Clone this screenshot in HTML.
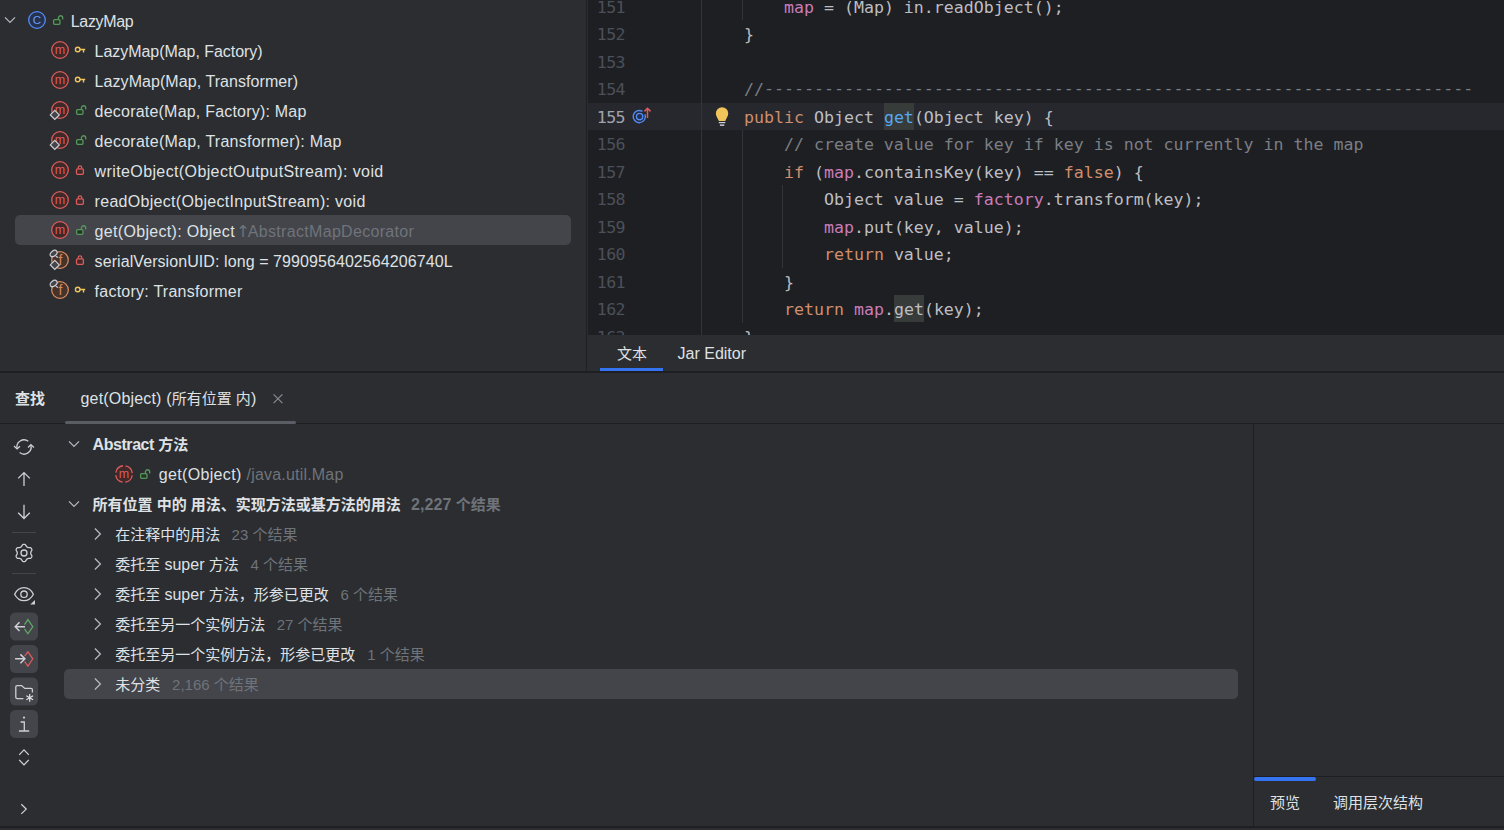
<!DOCTYPE html>
<html lang="zh-CN">
<head>
<meta charset="utf-8">
<title>LazyMap</title>
<style>
html,body{margin:0;padding:0;}
body{width:1504px;height:830px;overflow:hidden;position:relative;background:#2b2d30;
  font-family:"Liberation Sans","Noto Sans CJK SC",sans-serif;font-size:15px;color:#dfe1e5;}
.abs{position:absolute;}
svg{position:absolute;overflow:visible;}
/* ---------- structure tree (top-left) ---------- */
.srow{position:absolute;left:0;height:30px;line-height:30px;white-space:nowrap;font-size:16px;color:#dfe1e5;}
.srow .t{position:absolute;top:2px;}
.g{color:#6f737a;}
/* ---------- editor ---------- */
#editor{position:absolute;left:588px;top:0;width:916px;height:335px;background:#1e1f22;overflow:hidden;}
.ln,.cl{position:absolute;height:27.5px;line-height:27.5px;white-space:pre;font-family:"DejaVu Sans Mono","Liberation Mono",monospace;font-size:16.6px;}
.ln{left:0;width:37px;text-align:right;color:#4b5059;letter-spacing:-0.6px;margin-top:1px;}
.cl{left:156px;color:#bcbec4;margin-top:1px;}
.k{color:#cf8e6d;}.f{color:#c77dbb;}.c{color:#7a7e85;}.m{color:#56a8f5;}
.hl{background:#373b39;padding:5px 0 3px;}
/* ---------- find tree (bottom) ---------- */
.frow{position:absolute;left:0;height:30px;line-height:30px;white-space:nowrap;font-size:15px;color:#dfe1e5;}
.frow .t{position:absolute;top:1px;}
.b{font-weight:bold;}
</style>
</head>
<body>

<!-- ================= STRUCTURE PANEL ================= -->
<div id="structure" class="abs" style="left:0;top:0;width:586px;height:371px;background:#2b2d30;overflow:hidden;">
<!--STRUCT-->
<div class="abs" style="left:15px;top:215px;width:556px;height:30px;border-radius:5px;background:#43454a;"></div>
<svg style="left:0px;top:10px" width="20" height="20" viewBox="0 0 20 20"><path d="M5 7.4L10 12.4L15 7.4" fill="none" stroke="#b4b8bf" stroke-width="1.3"/></svg>
<svg style="left:27px;top:10px" width="20" height="20" viewBox="0 0 20 20"><circle cx="10" cy="10" r="8.3" fill="#25324d" stroke="#548af7" stroke-width="1.3"/><text x="10" y="14.1" text-anchor="middle" font-family="Liberation Sans,sans-serif" font-size="11.5" fill="#6b9bfa">C</text></svg>
<svg style="left:47px;top:10px" width="20" height="20" viewBox="0 0 20 20"><rect x="6.6" y="9.7" width="6.4" height="4.6" rx="1" fill="#253627" stroke="#57965c" stroke-width="1.3"/><path d="M11.4 9.2V7.9a2.15 2.15 0 0 1 4.3 0V9.4" fill="none" stroke="#57965c" stroke-width="1.3"/></svg>
<div class="srow" style="top:5px"><span class="t" style="left:70.8px;letter-spacing:-0.346px">LazyMap</span></div>
<svg style="left:50px;top:40px" width="20" height="20" viewBox="0 0 20 20"><circle cx="10" cy="10" r="8.3" fill="#402929" stroke="#db5c5c" stroke-width="1.3"/><text x="10" y="14.2" text-anchor="middle" font-family="Liberation Sans,sans-serif" font-size="12.5" fill="#db5c5c">m</text></svg>
<svg style="left:70px;top:40px" width="20" height="20" viewBox="0 0 20 20"><circle cx="7.7" cy="9.5" r="2.3" fill="none" stroke="#f2c55c" stroke-width="1.4"/><path d="M10 9.5H15.2M13.5 9.5V12.4" fill="none" stroke="#f2c55c" stroke-width="1.4"/></svg>
<div class="srow" style="top:35px"><span class="t" style="left:94.6px;letter-spacing:-0.045px">LazyMap(Map, Factory)</span></div>
<svg style="left:50px;top:70px" width="20" height="20" viewBox="0 0 20 20"><circle cx="10" cy="10" r="8.3" fill="#402929" stroke="#db5c5c" stroke-width="1.3"/><text x="10" y="14.2" text-anchor="middle" font-family="Liberation Sans,sans-serif" font-size="12.5" fill="#db5c5c">m</text></svg>
<svg style="left:70px;top:70px" width="20" height="20" viewBox="0 0 20 20"><circle cx="7.7" cy="9.5" r="2.3" fill="none" stroke="#f2c55c" stroke-width="1.4"/><path d="M10 9.5H15.2M13.5 9.5V12.4" fill="none" stroke="#f2c55c" stroke-width="1.4"/></svg>
<div class="srow" style="top:65px"><span class="t" style="left:94.6px;letter-spacing:0.066px">LazyMap(Map, Transformer)</span></div>
<svg style="left:50px;top:100px" width="20" height="20" viewBox="0 0 20 20"><circle cx="10" cy="10" r="8.3" fill="#402929" stroke="#db5c5c" stroke-width="1.3"/><text x="10" y="14.2" text-anchor="middle" font-family="Liberation Sans,sans-serif" font-size="12.5" fill="#db5c5c">m</text></svg>
<svg style="left:50px;top:100px" width="20" height="20" viewBox="0 0 20 20"><path d="M4.8 10.3L9.3 14.9L4.8 19.5L0.3 14.9Z" fill="#43454a" stroke="#ced0d6" stroke-width="1.2"/></svg>
<svg style="left:70px;top:100px" width="20" height="20" viewBox="0 0 20 20"><rect x="6.6" y="9.7" width="6.4" height="4.6" rx="1" fill="#253627" stroke="#57965c" stroke-width="1.3"/><path d="M11.4 9.2V7.9a2.15 2.15 0 0 1 4.3 0V9.4" fill="none" stroke="#57965c" stroke-width="1.3"/></svg>
<div class="srow" style="top:95px"><span class="t" style="left:94.6px;letter-spacing:0.211px">decorate(Map, Factory): Map</span></div>
<svg style="left:50px;top:130px" width="20" height="20" viewBox="0 0 20 20"><circle cx="10" cy="10" r="8.3" fill="#402929" stroke="#db5c5c" stroke-width="1.3"/><text x="10" y="14.2" text-anchor="middle" font-family="Liberation Sans,sans-serif" font-size="12.5" fill="#db5c5c">m</text></svg>
<svg style="left:50px;top:130px" width="20" height="20" viewBox="0 0 20 20"><path d="M4.8 10.3L9.3 14.9L4.8 19.5L0.3 14.9Z" fill="#43454a" stroke="#ced0d6" stroke-width="1.2"/></svg>
<svg style="left:70px;top:130px" width="20" height="20" viewBox="0 0 20 20"><rect x="6.6" y="9.7" width="6.4" height="4.6" rx="1" fill="#253627" stroke="#57965c" stroke-width="1.3"/><path d="M11.4 9.2V7.9a2.15 2.15 0 0 1 4.3 0V9.4" fill="none" stroke="#57965c" stroke-width="1.3"/></svg>
<div class="srow" style="top:125px"><span class="t" style="left:94.6px;letter-spacing:0.252px">decorate(Map, Transformer): Map</span></div>
<svg style="left:50px;top:160px" width="20" height="20" viewBox="0 0 20 20"><circle cx="10" cy="10" r="8.3" fill="#402929" stroke="#db5c5c" stroke-width="1.3"/><text x="10" y="14.2" text-anchor="middle" font-family="Liberation Sans,sans-serif" font-size="12.5" fill="#db5c5c">m</text></svg>
<svg style="left:70px;top:160px" width="20" height="20" viewBox="0 0 20 20"><rect x="6.5" y="8.9" width="6.9" height="5.4" rx="1" fill="#402929" stroke="#db5c5c" stroke-width="1.3"/><path d="M8.3 8.6V7.5a1.7 1.7 0 0 1 3.4 0V8.6" fill="none" stroke="#db5c5c" stroke-width="1.3"/></svg>
<div class="srow" style="top:155px"><span class="t" style="left:94.6px;letter-spacing:0.385px">writeObject(ObjectOutputStream): void</span></div>
<svg style="left:50px;top:190px" width="20" height="20" viewBox="0 0 20 20"><circle cx="10" cy="10" r="8.3" fill="#402929" stroke="#db5c5c" stroke-width="1.3"/><text x="10" y="14.2" text-anchor="middle" font-family="Liberation Sans,sans-serif" font-size="12.5" fill="#db5c5c">m</text></svg>
<svg style="left:70px;top:190px" width="20" height="20" viewBox="0 0 20 20"><rect x="6.5" y="8.9" width="6.9" height="5.4" rx="1" fill="#402929" stroke="#db5c5c" stroke-width="1.3"/><path d="M8.3 8.6V7.5a1.7 1.7 0 0 1 3.4 0V8.6" fill="none" stroke="#db5c5c" stroke-width="1.3"/></svg>
<div class="srow" style="top:185px"><span class="t" style="left:94.6px;letter-spacing:0.298px">readObject(ObjectInputStream): void</span></div>
<svg style="left:50px;top:220px" width="20" height="20" viewBox="0 0 20 20"><circle cx="10" cy="10" r="8.3" fill="#402929" stroke="#db5c5c" stroke-width="1.3"/><text x="10" y="14.2" text-anchor="middle" font-family="Liberation Sans,sans-serif" font-size="12.5" fill="#db5c5c">m</text></svg>
<svg style="left:70px;top:220px" width="20" height="20" viewBox="0 0 20 20"><rect x="6.6" y="9.7" width="6.4" height="4.6" rx="1" fill="#253627" stroke="#57965c" stroke-width="1.3"/><path d="M11.4 9.2V7.9a2.15 2.15 0 0 1 4.3 0V9.4" fill="none" stroke="#57965c" stroke-width="1.3"/></svg>
<div class="srow" style="top:215px"><span class="t" style="left:94.6px;letter-spacing:0.317px">get(Object): Object</span><span class="t g" style="left:236.2px;top:2px;font-family:'DejaVu Sans',sans-serif;font-size:16.5px">↑</span><span class="t g" style="left:247.8px;letter-spacing:0.317px">AbstractMapDecorator</span></div>
<svg style="left:50px;top:250px" width="20" height="20" viewBox="0 0 20 20"><circle cx="10" cy="10" r="8.3" fill="#45322b" stroke="#d68a5e" stroke-width="1.3"/><text x="10.5" y="14.9" text-anchor="middle" font-family="Liberation Sans,sans-serif" font-size="14" fill="#d68a5e">f</text></svg>
<svg style="left:50px;top:250px" width="20" height="20" viewBox="0 0 20 20"><ellipse cx="3.6" cy="3.5" rx="3.9" ry="2.6" transform="rotate(-38 3.6 3.5)" fill="#43454a" stroke="#ced0d6" stroke-width="1.2"/><path d="M5.8 6.2L8 7.6" stroke="#ced0d6" stroke-width="1.2" fill="none"/></svg>
<svg style="left:50px;top:250px" width="20" height="20" viewBox="0 0 20 20"><path d="M4.8 10.3L9.3 14.9L4.8 19.5L0.3 14.9Z" fill="#43454a" stroke="#ced0d6" stroke-width="1.2"/></svg>
<svg style="left:70px;top:250px" width="20" height="20" viewBox="0 0 20 20"><rect x="6.5" y="8.9" width="6.9" height="5.4" rx="1" fill="#402929" stroke="#db5c5c" stroke-width="1.3"/><path d="M8.3 8.6V7.5a1.7 1.7 0 0 1 3.4 0V8.6" fill="none" stroke="#db5c5c" stroke-width="1.3"/></svg>
<div class="srow" style="top:245px"><span class="t" style="left:94.6px;letter-spacing:0.078px">serialVersionUID: long = 7990956402564206740L</span></div>
<svg style="left:50px;top:280px" width="20" height="20" viewBox="0 0 20 20"><circle cx="10" cy="10" r="8.3" fill="#45322b" stroke="#d68a5e" stroke-width="1.3"/><text x="10.5" y="14.9" text-anchor="middle" font-family="Liberation Sans,sans-serif" font-size="14" fill="#d68a5e">f</text></svg>
<svg style="left:50px;top:280px" width="20" height="20" viewBox="0 0 20 20"><ellipse cx="3.6" cy="3.5" rx="3.9" ry="2.6" transform="rotate(-38 3.6 3.5)" fill="#43454a" stroke="#ced0d6" stroke-width="1.2"/><path d="M5.8 6.2L8 7.6" stroke="#ced0d6" stroke-width="1.2" fill="none"/></svg>
<svg style="left:70px;top:280px" width="20" height="20" viewBox="0 0 20 20"><circle cx="7.7" cy="9.5" r="2.3" fill="none" stroke="#f2c55c" stroke-width="1.4"/><path d="M10 9.5H15.2M13.5 9.5V12.4" fill="none" stroke="#f2c55c" stroke-width="1.4"/></svg>
<div class="srow" style="top:275px"><span class="t" style="left:94.6px;letter-spacing:0.242px">factory: Transformer</span></div>
<!--/STRUCT-->
</div>
<div class="abs" style="left:586px;top:0;width:1px;height:371px;background:#1e1f22;"></div>

<!-- ================= EDITOR ================= -->
<div id="editor">
<div class="abs" style="left:0;top:103px;width:916px;height:27px;background:#26282e;"></div>
<div class="abs" style="left:113px;top:0;width:1px;height:335px;background:#313438;"></div>
<div class="abs" style="left:154px;top:0;width:1px;height:20px;background:#313438;"></div>
<div class="abs" style="left:154px;top:130px;width:1px;height:193px;background:#313438;"></div>
<div class="abs" style="left:194px;top:185px;width:1px;height:83px;background:#313438;"></div>
<div class="ln" style="top:-7px;">151</div><div class="cl" style="top:-7px;">    <span class="f">map</span> = (Map) in.readObject();</div>
<div class="ln" style="top:20px;">152</div><div class="cl" style="top:20px;">}</div>
<div class="ln" style="top:48px;">153</div><div class="cl" style="top:48px;"></div>
<div class="ln" style="top:75px;">154</div><div class="cl" style="top:75px;"><span class="c">//<span style="position:relative;top:-1px">-----------------------------------------------------------------------</span></span></div>
<div class="ln" style="top:103px;color:#a1a3ab;">155</div><div class="cl" style="top:103px;"><span class="k">public</span> Object <span class="m hl">get</span>(Object key) {</div>
<div class="ln" style="top:130px;">156</div><div class="cl" style="top:130px;">    <span class="c">// create value for key if key is not currently in the map</span></div>
<div class="ln" style="top:158px;">157</div><div class="cl" style="top:158px;">    <span class="k">if</span> (<span class="f">map</span>.containsKey(key) == <span class="k">false</span>) {</div>
<div class="ln" style="top:185px;">158</div><div class="cl" style="top:185px;">        Object value = <span class="f">factory</span>.transform(key);</div>
<div class="ln" style="top:213px;">159</div><div class="cl" style="top:213px;">        <span class="f">map</span>.put(key, value);</div>
<div class="ln" style="top:240px;">160</div><div class="cl" style="top:240px;">        <span class="k">return</span> value;</div>
<div class="ln" style="top:268px;">161</div><div class="cl" style="top:268px;">    }</div>
<div class="ln" style="top:295px;">162</div><div class="cl" style="top:295px;">    <span class="k">return</span> <span class="f">map</span>.<span class="hl">get</span>(key);</div>
<div class="ln" style="top:323px;">163</div><div class="cl" style="top:323px;">}</div>
<svg style="left:40px;top:103px" width="40" height="27" viewBox="0 0 40 27">
<path d="M16.9 11.2A6.1 6.1 0 1 1 14.5 8.4" fill="none" stroke="#548af7" stroke-width="1.4"/>
<circle cx="11.6" cy="13.6" r="3.2" fill="#25324d" stroke="#548af7" stroke-width="1.4"/>
<path d="M19.5 14.9V5.4M16.4 8.4L19.5 5.3L22.6 8.4" fill="none" stroke="#db5c5c" stroke-width="1.5"/>
</svg>
<svg style="left:124px;top:103px" width="20" height="27" viewBox="0 0 20 27">
<circle cx="10.04" cy="10.5" r="6.2" fill="#f2c55c"/>
<path d="M5 14L15.1 14L13.3 18H6.8Z" fill="#f2c55c"/>
<rect x="6.8" y="19" width="6.5" height="1.2" fill="#ced0d6"/>
<rect x="7.9" y="21.3" width="4.4" height="1.7" fill="#b4b8bf"/>
</svg>
</div>

<!-- editor bottom tabs -->
<div class="abs" style="left:587px;top:335px;width:917px;height:36px;background:#2b2d30;">
  <div class="abs" style="left:30px;top:1px;height:36px;line-height:36px;font-size:15px;color:#dfe1e5;">文本</div>
  <div class="abs" style="left:90.6px;top:1px;height:36px;line-height:36px;font-size:16px;letter-spacing:-0.007px;color:#dfe1e5;">Jar Editor</div>
  <div class="abs" style="left:13px;top:33px;width:63px;height:3px;background:#3574f0;"></div>
</div>
<div class="abs" style="left:0;top:371px;width:1504px;height:2px;background:#1e1f22;"></div>

<!-- ================= FIND PANEL ================= -->
<div id="find" class="abs" style="left:0;top:373px;width:1504px;height:453px;background:#2b2d30;overflow:hidden;">
<!--FIND-->
<div class="abs b" style="left:15px;top:11px;height:30px;line-height:30px;font-size:15px;color:#dfe1e5;">查找</div>
<div class="abs" style="left:80.5px;top:11px;height:30px;line-height:30px;font-size:15px;color:#dfe1e5;white-space:pre;"><span style="font-size:16px;letter-spacing:0.175px">get(Object) (</span>所有位置 内<span style="font-size:16px">)</span></div>
<svg style="left:268px;top:16px" width="20" height="20" viewBox="0 0 20 20"><path d="M5.6 5.4L14.4 14.2M14.4 5.4L5.6 14.2" fill="none" stroke="#868a91" stroke-width="1.2"/></svg>
<div class="abs" style="left:0;top:50px;width:1504px;height:1px;background:#1e1f22;"></div>
<div class="abs" style="left:65px;top:48px;width:231px;height:3px;border-radius:1.5px;background:#5a5d63;"></div>
<svg style="left:0;top:0" width="50" height="453" viewBox="0 0 50 453"><path d="M17.06 75.48A7.1 7.1 0 0 1 28.27 68.33" fill="none" stroke="#ced0d6" stroke-width="1.3"/><path d="M30.86 72.16A7.1 7.1 0 0 1 19.63 79.59" fill="none" stroke="#ced0d6" stroke-width="1.3"/><polyline points="14,73 17.05,75.9 20,73.2" fill="none" stroke="#ced0d6" stroke-width="1.3"/><polyline points="28,74.5 30.9,71.6 33.9,74.5" fill="none" stroke="#ced0d6" stroke-width="1.3"/><path d="M24 113V99.6M18.2 105.4L24 99.6L29.8 105.4" fill="none" stroke="#ced0d6" stroke-width="1.3"/><path d="M24 131.7V145.5M18.2 139.7L24 145.5L29.8 139.7" fill="none" stroke="#ced0d6" stroke-width="1.3"/><rect x="12" y="159" width="24" height="1" fill="#43454a"/><rect x="12" y="200" width="24" height="1" fill="#43454a"/><path d="M30.70 180.00L30.76 179.41L30.93 178.78L31.44 178.01L31.86 177.14L31.81 176.36L31.53 175.65L31.06 175.06L30.40 174.63L29.44 174.56L28.53 174.61L27.89 174.44L27.35 174.20L26.87 173.85L26.41 173.38L25.99 172.56L25.45 171.77L24.75 171.42L24.00 171.30L23.25 171.42L22.55 171.77L22.01 172.56L21.59 173.38L21.13 173.85L20.65 174.20L20.11 174.44L19.47 174.61L18.56 174.56L17.60 174.63L16.94 175.06L16.47 175.65L16.19 176.36L16.14 177.14L16.56 178.01L17.07 178.78L17.24 179.41L17.30 180.00L17.24 180.59L17.07 181.22L16.56 181.99L16.14 182.86L16.19 183.64L16.47 184.35L16.94 184.94L17.60 185.37L18.56 185.44L19.47 185.39L20.11 185.56L20.65 185.80L21.13 186.15L21.59 186.62L22.01 187.44L22.55 188.23L23.25 188.58L24.00 188.70L24.75 188.58L25.45 188.23L25.99 187.44L26.41 186.62L26.87 186.15L27.35 185.80L27.89 185.56L28.53 185.39L29.44 185.44L30.40 185.37L31.06 184.94L31.53 184.35L31.81 183.64L31.86 182.86L31.44 181.99L30.93 181.22L30.76 180.59Z" fill="none" stroke="#ced0d6" stroke-width="1.3" stroke-linejoin="round"/><circle cx="24" cy="180" r="3" fill="none" stroke="#ced0d6" stroke-width="1.3"/><path d="M14.6 221.2C17 216.6 20.5 214.7 24 214.7S31 216.6 33.4 221.2C31 225.79999999999998 27.5 227.7 24 227.7S17 225.79999999999998 14.6 221.2Z" fill="none" stroke="#ced0d6" stroke-width="1.3"/><circle cx="24" cy="221.2" r="3.2" fill="none" stroke="#ced0d6" stroke-width="1.3"/><path d="M35 227V231.6H30.2Z" fill="#ced0d6"/><rect x="10" y="239.5" width="28" height="28" rx="5.5" fill="#43454a"/><rect x="10" y="272" width="28" height="28" rx="5.5" fill="#43454a"/><rect x="10" y="304.5" width="28" height="28" rx="5.5" fill="#43454a"/><rect x="10" y="337" width="28" height="28" rx="5.5" fill="#43454a"/><path d="M25 253.7H15.4M19.5 249.3L15.2 253.7L19.5 258.1" fill="none" stroke="#ced0d6" stroke-width="1.5"/><polyline points="24.5,251.6 27.9,246.6 32.8,253.7 27.9,260.8 24.5,255.8" fill="none" stroke="#5fad65" stroke-width="1.2"/><path d="M15.1 285.8H24.7M20.4 281.4L24.9 285.8L20.4 290.2" fill="none" stroke="#ced0d6" stroke-width="1.5"/><polyline points="24.6,283.2 27.9,278.8 32.8,285.8 27.9,293.2 24.6,288.6" fill="none" stroke="#db5c5c" stroke-width="1.2"/><path d="M23.4 325.6H17.2A1.4 1.4 0 0 1 15.8 324.2V314A1.4 1.4 0 0 1 17.2 312.6H21.6L24.8 315.4H31A1.4 1.4 0 0 1 32.4 316.8V319.4" fill="none" stroke="#ced0d6" stroke-width="1.3"/><path d="M29.70 328.70L29.70 320.90M26.32 326.75L33.08 322.85M33.08 326.75L26.32 322.85" fill="none" stroke="#dfe1e5" stroke-width="1.2"/><circle cx="24" cy="344.6" r="1.1" fill="#ced0d6"/><path d="M20.6 349H24.3V358M18.9 358H29.2" fill="none" stroke="#ced0d6" stroke-width="1.3"/><path d="M19.2 381.9L24 376.9L28.8 381.9M19.2 386.9L24 391.9L28.8 386.9" fill="none" stroke="#ced0d6" stroke-width="1.3"/><path d="M21.3 431.3L26.2 436.1L21.3 440.9" fill="none" stroke="#ced0d6" stroke-width="1.3"/></svg>
<div class="abs" style="left:64px;top:296px;width:1174px;height:30px;border-radius:5px;background:#43454a;"></div>
<svg style="left:64px;top:61px" width="20" height="20" viewBox="0 0 20 20"><path d="M5 7.4L10 12.4L15 7.4" fill="none" stroke="#b4b8bf" stroke-width="1.3"/></svg>
<div class="frow b" style="top:56px"><span class="t" style="left:92.5px;white-space:pre"><span style="font-size:16px;letter-spacing:-0.426px">Abstract</span> 方法</span></div>
<svg style="left:114px;top:91px" width="20" height="20" viewBox="0 0 20 20"><circle cx="10" cy="10" r="8.3" fill="#402929" stroke="#db5c5c" stroke-width="1.3" stroke-dasharray="10.44 2.6" stroke-dashoffset="-1.3"/><text x="10" y="14.2" text-anchor="middle" font-family="Liberation Sans,sans-serif" font-size="12.5" fill="#db5c5c">m</text></svg>
<svg style="left:134px;top:91px" width="20" height="20" viewBox="0 0 20 20"><rect x="6.6" y="9.7" width="6.4" height="4.6" rx="1" fill="#253627" stroke="#57965c" stroke-width="1.3"/><path d="M11.4 9.2V7.9a2.15 2.15 0 0 1 4.3 0V9.4" fill="none" stroke="#57965c" stroke-width="1.3"/></svg>
<div class="frow" style="top:86px"><span class="t" style="left:158.7px;font-size:16px;letter-spacing:0.351px">get(Object)</span><span class="t g" style="left:246.5px;font-size:16px;letter-spacing:0.195px">/java.util.Map</span></div>
<svg style="left:64px;top:121px" width="20" height="20" viewBox="0 0 20 20"><path d="M5 7.4L10 12.4L15 7.4" fill="none" stroke="#b4b8bf" stroke-width="1.3"/></svg>
<div class="frow b" style="top:116px"><span class="t" style="left:92.5px;white-space:pre">所有位置 中的 用法、实现方法或基方法的用法</span><span class="t g" style="left:411px;white-space:pre"><span style="font-size:16px;letter-spacing:0.1px">2,227</span> 个结果</span></div>
<svg style="left:87px;top:151px" width="20" height="20" viewBox="0 0 20 20"><path d="M7.9 4.5L13.4 10L7.9 15.5" fill="none" stroke="#b4b8bf" stroke-width="1.3"/></svg>
<div class="frow" style="top:146px"><span class="t" style="left:115.3px;white-space:pre">在注释中的用法</span><span class="t g" style="left:231.6px;white-space:pre">23 个结果</span></div>
<svg style="left:87px;top:181px" width="20" height="20" viewBox="0 0 20 20"><path d="M7.9 4.5L13.4 10L7.9 15.5" fill="none" stroke="#b4b8bf" stroke-width="1.3"/></svg>
<div class="frow" style="top:176px"><span class="t" style="left:115.3px;white-space:pre">委托至 <span style="font-size:16px">super</span> 方法</span><span class="t g" style="left:250.4px;white-space:pre">4 个结果</span></div>
<svg style="left:87px;top:211px" width="20" height="20" viewBox="0 0 20 20"><path d="M7.9 4.5L13.4 10L7.9 15.5" fill="none" stroke="#b4b8bf" stroke-width="1.3"/></svg>
<div class="frow" style="top:206px"><span class="t" style="left:115.3px;white-space:pre">委托至 <span style="font-size:16px">super</span> 方法，形参已更改</span><span class="t g" style="left:340.4px;white-space:pre">6 个结果</span></div>
<svg style="left:87px;top:241px" width="20" height="20" viewBox="0 0 20 20"><path d="M7.9 4.5L13.4 10L7.9 15.5" fill="none" stroke="#b4b8bf" stroke-width="1.3"/></svg>
<div class="frow" style="top:236px"><span class="t" style="left:115.3px;white-space:pre">委托至另一个实例方法</span><span class="t g" style="left:276.7px;white-space:pre">27 个结果</span></div>
<svg style="left:87px;top:271px" width="20" height="20" viewBox="0 0 20 20"><path d="M7.9 4.5L13.4 10L7.9 15.5" fill="none" stroke="#b4b8bf" stroke-width="1.3"/></svg>
<div class="frow" style="top:266px"><span class="t" style="left:115.3px;white-space:pre">委托至另一个实例方法，形参已更改</span><span class="t g" style="left:367.2px;white-space:pre">1 个结果</span></div>
<svg style="left:87px;top:301px" width="20" height="20" viewBox="0 0 20 20"><path d="M7.9 4.5L13.4 10L7.9 15.5" fill="none" stroke="#b4b8bf" stroke-width="1.3"/></svg>
<div class="frow" style="top:296px"><span class="t" style="left:115.3px;white-space:pre">未分类</span><span class="t g" style="left:172.1px;white-space:pre">2,166 个结果</span></div>
<div class="abs" style="left:1253px;top:51px;width:1px;height:402px;background:#1e1f22;"></div>
<div class="abs" style="left:1254px;top:403px;width:250px;height:1px;background:#1e1f22;"></div>
<div class="abs" style="left:1254px;top:404px;width:62px;height:4px;border-radius:2px;background:#3574f0;"></div>
<div class="abs" style="left:1270px;top:415px;height:30px;line-height:30px;font-size:15px;color:#dfe1e5;">预览</div>
<div class="abs" style="left:1333px;top:415px;height:30px;line-height:30px;font-size:15px;color:#dfe1e5;">调用层次结构</div>
<!--/FIND-->
</div>
<div class="abs" style="left:0;top:826px;width:1504px;height:2px;background:#1e1f22;"></div>

</body>
</html>
